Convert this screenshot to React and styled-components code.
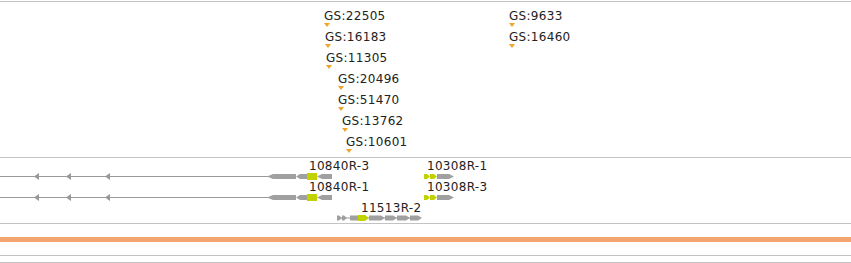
import styled, { createGlobalStyle } from "styled-components";

const GlobalStyle = createGlobalStyle`
  html, body {
    margin: 0;
    padding: 0;
    background: #ffffff;
  }
  body {
    font-family: "DejaVu Sans", "Liberation Sans", sans-serif;
  }
`;

const markers = [
  { id: "GS:22505", x: 324, row: 0 },
  { id: "GS:16183", x: 325, row: 1 },
  { id: "GS:11305", x: 326, row: 2 },
  { id: "GS:20496", x: 338, row: 3 },
  { id: "GS:51470", x: 338, row: 4 },
  { id: "GS:13762", x: 342, row: 5 },
  { id: "GS:10601", x: 346, row: 6 },
  { id: "GS:9633", x: 509, row: 0 },
  { id: "GS:16460", x: 509, row: 1 },
];

const geneLabels = [
  { name: "10840R-3", x: 309, row: 0 },
  { name: "10840R-1", x: 309, row: 1 },
  { name: "10308R-1", x: 427, row: 0 },
  { name: "10308R-3", x: 427, row: 1 },
  { name: "11513R-2", x: 361, row: 2 },
];

const GREY = "#a0a0a0";
const GREEN = "#c0d200";
const rowY = [18.5, 39.5, 60];

function leftArrow(x1, x2, cy, h, tip) {
  const t = cy - h / 2;
  const b = cy + h / 2;
  return `${x1},${cy} ${x1 + tip},${t} ${x2},${t} ${x2},${b} ${x1 + tip},${b}`;
}

function rightArrow(x1, x2, cy, h, tip) {
  const t = cy - h / 2;
  const b = cy + h / 2;
  return `${x1},${t} ${x2 - tip},${t} ${x2},${cy} ${x2 - tip},${b} ${x1},${b}`;
}

function ReverseGene({ cy }) {
  return (
    <g>
      <line x1="0" y1={cy} x2="268" y2={cy} stroke="#9a9a9a" strokeWidth="1" />
      {[34, 66, 105].map((x) => (
        <polygon key={x} points={`${x},${cy} ${x + 5},${cy - 3.5} ${x + 5},${cy + 3.5}`} fill="#999" />
      ))}
      <polygon points={leftArrow(267, 296, cy, 5, 6)} fill={GREY} />
      <polygon points={leftArrow(296, 307, cy, 5, 4)} fill={GREY} />
      <rect x="307" y={cy - 3.5} width="10" height="7" fill={GREEN} />
      <polygon points={leftArrow(317, 332, cy, 5, 5)} fill={GREY} />
    </g>
  );
}

function ForwardGene({ cy }) {
  return (
    <g>
      <polygon points={rightArrow(424, 430, cy, 5, 3)} fill={GREEN} />
      <polygon points={rightArrow(430, 437, cy, 5, 3)} fill={GREEN} />
      <polygon points={rightArrow(437, 454, cy, 5, 5)} fill={GREY} />
    </g>
  );
}

function ShortGene({ cy }) {
  const greys = [
    [369, 385],
    [385, 397],
    [397, 410],
    [410, 422],
  ];
  return (
    <g>
      <line x1="337" y1={cy} x2="420" y2={cy} stroke={GREY} strokeWidth="1" />
      <polygon points={rightArrow(337, 342, cy, 5, 3)} fill={GREY} />
      <polygon points={rightArrow(342, 347, cy, 5, 3)} fill={GREY} />
      <rect x="350" y={cy - 2.5} width="8" height="5" fill={GREY} />
      <polygon points={rightArrow(358, 369, cy, 6, 4)} fill={GREEN} />
      {greys.map(([a, b]) => (
        <polygon key={a} points={rightArrow(a, b, cy, 5, 4)} fill={GREY} />
      ))}
    </g>
  );
}

export default function App() {
  return (
    <>
      <GlobalStyle />
      <Page>
        <Rule $top={1} />
        <MarkerTrack>
          {markers.map((m) => (
            <Marker key={m.id} $x={m.x} $top={8 + m.row * 21}>
              <Label>{m.id}</Label>
              <Pin />
            </Marker>
          ))}
        </MarkerTrack>
        <Rule />
        <GeneTrack>
          <svg width="851" height="65" viewBox="0 0 851 65">
            <ReverseGene cy={rowY[0]} />
            <ReverseGene cy={rowY[1]} />
            <ForwardGene cy={rowY[0]} />
            <ForwardGene cy={rowY[1]} />
            <ShortGene cy={rowY[2]} />
          </svg>
          {geneLabels.map((g) => (
            <GeneName key={g.name} $x={g.x} $top={2 + g.row * 21}>
              {g.name}
            </GeneName>
          ))}
        </GeneTrack>
        <Rule />
        <Band />
        <Rule $top={13} />
        <Rule $top={6} />
      </Page>
    </>
  );
}

const Page = styled.div`
  width: 851px;
  height: 263px;
  display: flex;
  flex-direction: column;
  background: #ffffff;
  overflow: hidden;
`;

const Rule = styled.div`
  flex: none;
  height: 1px;
  margin-top: ${(p) => p.$top || 0}px;
  background: #c3c3c3;
`;

const MarkerTrack = styled.div`
  position: relative;
  flex: none;
  height: 155px;
`;

const Marker = styled.div`
  position: absolute;
  left: ${(p) => p.$x}px;
  top: ${(p) => p.$top}px;
  display: flex;
  flex-direction: column;
  align-items: flex-start;
`;

const Label = styled.span`
  font-size: 12px;
  line-height: 13px;
  letter-spacing: 0.3px;
  color: #222222;
  white-space: nowrap;
`;

const Pin = styled.span`
  width: 0;
  height: 0;
  border-left: 3px solid transparent;
  border-right: 3px solid transparent;
  border-top: 4px solid #f0a52a;
`;

const GeneTrack = styled.div`
  position: relative;
  flex: none;
  height: 65px;

  svg {
    display: block;
  }
`;

const GeneName = styled.span`
  position: absolute;
  left: ${(p) => p.$x}px;
  top: ${(p) => p.$top}px;
  font-size: 12px;
  line-height: 13px;
  letter-spacing: 0.3px;
  color: #222222;
  white-space: nowrap;
`;

const Band = styled.div`
  flex: none;
  height: 5px;
  margin-top: 13px;
  background: #f4a56f;
`;
